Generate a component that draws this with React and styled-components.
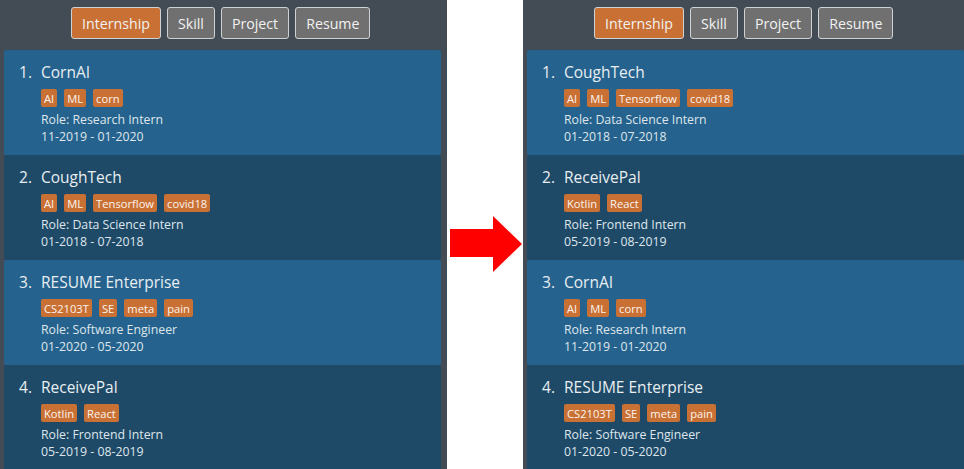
import React from "react";
import styled, { createGlobalStyle } from "styled-components";

const Global = createGlobalStyle`
  html, body { margin: 0; padding: 0; background: #ffffff; }
  body { width: 964px; height: 469px; overflow: hidden; font-family: "Open Sans", "Noto Sans", sans-serif; }
`;

const Page = styled.div`
  display: flex;
  width: 964px;
  height: 469px;
  overflow: hidden;
  background: #ffffff;
`;

const Panel = styled.div`
  flex: 0 0 ${(p) => p.$width}px;
  width: ${(p) => p.$width}px;
  height: 469px;
  background: #434c55;
  display: flex;
  flex-direction: column;
  padding: 0 ${(p) => p.$padRight}px 0 4px;
  box-sizing: border-box;
  overflow: hidden;
`;

const Toolbar = styled.div`
  display: flex;
  gap: 6px;
  padding: 7px 0 11px 67px;
`;

const TabButton = styled.div`
  height: 32px;
  box-sizing: border-box;
  padding: 0 10px;
  display: flex;
  align-items: center;
  border: 1px solid #cfd2d4;
  border-radius: 3px;
  background: ${(p) => (p.$active ? "#c97034" : "#707070")};
  color: #f2f2f2;
  font-size: 14.2px;
`;

const Card = styled.div`
  flex: 0 0 105px;
  height: 105px;
  box-sizing: border-box;
  padding: 11px 0 0 15px;
  background: ${(p) => (p.$odd ? "#25638e" : "#1e4a68")};
  border-radius: 2px;
  color: #dfe6eb;
`;

const TitleRow = styled.div`
  display: flex;
  align-items: center;
  height: 21px;
  font-size: 15.5px;
  color: #e9eef2;
`;

const Num = styled.span`
  margin-right: 9px;
`;

const Details = styled.div`
  padding-left: 22px;
`;

const Tags = styled.div`
  display: flex;
  gap: 7px;
  margin-top: 7px;
  height: 18px;
`;

const Tag = styled.span`
  display: inline-flex;
  align-items: center;
  height: 18px;
  padding: 0 3px;
  border-radius: 2px;
  background: #c97034;
  color: #fbf4ee;
  font-size: 11.2px;
`;

const Line = styled.div`
  font-size: 12.3px;
  line-height: 17px;
  margin-top: ${(p) => p.$mt || 0}px;
`;

const Gap = styled.div`
  flex: 0 0 76px;
  width: 76px;
  padding-top: 216px;
  box-sizing: border-box;
  display: flex;
  justify-content: flex-start;
  padding-left: 3px;
`;

const items = {
  corn: { name: "CornAI", tags: ["AI", "ML", "corn"], role: "Research Intern", date: "11-2019 - 01-2020" },
  cough: { name: "CoughTech", tags: ["AI", "ML", "Tensorflow", "covid18"], role: "Data Science Intern", date: "01-2018 - 07-2018" },
  resume: { name: "RESUME Enterprise", tags: ["CS2103T", "SE", "meta", "pain"], role: "Software Engineer", date: "01-2020 - 05-2020" },
  receive: { name: "ReceivePal", tags: ["Kotlin", "React"], role: "Frontend Intern", date: "05-2019 - 08-2019" },
};

const tabs = ["Internship", "Skill", "Project", "Resume"];

function ListPanel({ order, width, padRight }) {
  return (
    <Panel $width={width} $padRight={padRight}>
      <Toolbar>
        {tabs.map((t, i) => (
          <TabButton key={t} $active={i === 0}>{t}</TabButton>
        ))}
      </Toolbar>
      {order.map((key, i) => {
        const it = items[key];
        return (
          <Card key={key} $odd={i % 2 === 0}>
            <TitleRow>
              <Num>{i + 1}.</Num>
              {it.name}
            </TitleRow>
            <Details>
              <Tags>
                {it.tags.map((t) => (
                  <Tag key={t}>{t}</Tag>
                ))}
              </Tags>
              <Line $mt={4}>Role: {it.role}</Line>
              <Line>{it.date}</Line>
            </Details>
          </Card>
        );
      })}
    </Panel>
  );
}

function Arrow() {
  return (
    <svg width="73" height="57" viewBox="0 0 73 57">
      <polygon points="0,13 43,13 43,0 72,28 43,56 43,41 0,41" fill="#ff0000" />
    </svg>
  );
}

export default function App() {
  return (
    <Page>
      <Global />
      <ListPanel order={["corn", "cough", "resume", "receive"]} width={447} padRight={6} />
      <Gap>
        <Arrow />
      </Gap>
      <ListPanel order={["cough", "receive", "corn", "resume"]} width={447} padRight={6} />
    </Page>
  );
}
